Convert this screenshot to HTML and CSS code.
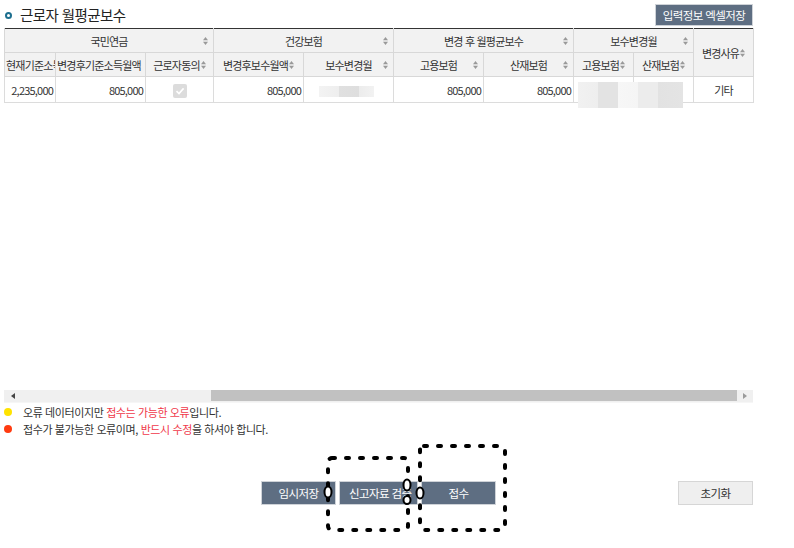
FILE: index.html
```html
<!DOCTYPE html>
<html lang="ko">
<head>
<meta charset="utf-8">
<title>근로자 월평균보수</title>
<link rel="stylesheet" href="styles.css">
</head>
<body>
<div class="page">
  <div class="top">
    <h2 class="title"><span class="bullet"></span>근로자 월평균보수</h2>
    <button class="btn btn-dark btn-excel">입력정보 엑셀저장</button>
  </div>

  <div class="grid-area">
    <table class="grid">
      <colgroup>
        <col class="w51"><col class="w90"><col class="w68"><col class="w90"><col class="w90">
        <col class="w90"><col class="w90"><col class="w60"><col class="w60"><col class="w60">
      </colgroup>
      <thead>
        <tr>
          <th colspan="3"><div class="cell">국민연금</div><svg class="sort" viewBox="0 0 5 8"><polygon points="0,3.2 2.5,0 5,3.2"/><polygon points="0,4.8 2.5,8 5,4.8"/></svg></th>
          <th colspan="2"><div class="cell">건강보험</div><svg class="sort" viewBox="0 0 5 8"><polygon points="0,3.2 2.5,0 5,3.2"/><polygon points="0,4.8 2.5,8 5,4.8"/></svg></th>
          <th colspan="2"><div class="cell">변경 후 월평균보수</div><svg class="sort" viewBox="0 0 5 8"><polygon points="0,3.2 2.5,0 5,3.2"/><polygon points="0,4.8 2.5,8 5,4.8"/></svg></th>
          <th colspan="2"><div class="cell">보수변경월</div><svg class="sort" viewBox="0 0 5 8"><polygon points="0,3.2 2.5,0 5,3.2"/><polygon points="0,4.8 2.5,8 5,4.8"/></svg></th>
          <th rowspan="2"><div class="cell cell-left">변경사유<svg class="sort-inline" viewBox="0 0 5 8"><polygon points="0,3.2 2.5,0 5,3.2"/><polygon points="0,4.8 2.5,8 5,4.8"/></svg></div></th>
        </tr>
        <tr>
          <th><div class="cell cell-left">현재기준소득월액</div></th>
          <th><div class="cell cell-left">변경후기준소득월액</div></th>
          <th><div class="cell">근로자동의<svg class="sort-inline" viewBox="0 0 5 8"><polygon points="0,3.2 2.5,0 5,3.2"/><polygon points="0,4.8 2.5,8 5,4.8"/></svg></div></th>
          <th><div class="cell">변경후보수월액<svg class="sort-inline" viewBox="0 0 5 8"><polygon points="0,3.2 2.5,0 5,3.2"/><polygon points="0,4.8 2.5,8 5,4.8"/></svg></div></th>
          <th><div class="cell">보수변경월</div><svg class="sort" viewBox="0 0 5 8"><polygon points="0,3.2 2.5,0 5,3.2"/><polygon points="0,4.8 2.5,8 5,4.8"/></svg></th>
          <th><div class="cell">고용보험</div><svg class="sort" viewBox="0 0 5 8"><polygon points="0,3.2 2.5,0 5,3.2"/><polygon points="0,4.8 2.5,8 5,4.8"/></svg></th>
          <th><div class="cell">산재보험</div><svg class="sort" viewBox="0 0 5 8"><polygon points="0,3.2 2.5,0 5,3.2"/><polygon points="0,4.8 2.5,8 5,4.8"/></svg></th>
          <th><div class="cell">고용보험<svg class="sort-inline" viewBox="0 0 5 8"><polygon points="0,3.2 2.5,0 5,3.2"/><polygon points="0,4.8 2.5,8 5,4.8"/></svg></div></th>
          <th><div class="cell">산재보험<svg class="sort-inline" viewBox="0 0 5 8"><polygon points="0,3.2 2.5,0 5,3.2"/><polygon points="0,4.8 2.5,8 5,4.8"/></svg></div></th>
        </tr>
      </thead>
      <tbody>
        <tr>
          <td class="num">2,235,000</td>
          <td class="num">805,000</td>
          <td class="ctr"><span class="chk"><svg viewBox="0 0 14 14"><path d="M3.5 7.2 L6 9.6 L10.6 4.4" fill="none" stroke="#fff" stroke-width="1.6"/></svg></span></td>
          <td class="num">805,000</td>
          <td class="ctr"></td>
          <td class="num">805,000</td>
          <td class="num">805,000</td>
          <td></td>
          <td></td>
          <td class="ctr">기타</td>
        </tr>
      </tbody>
    </table>
    <div class="blur blur-month"></div>
    <div class="blur blur-ins"></div>
  </div>

  <div class="hscroll">
    <span class="sb-btn sb-left"></span>
    <span class="sb-track"><span class="sb-thumb"></span></span>
    <span class="sb-btn sb-right"></span>
  </div>

  <ul class="legend">
    <li><span class="dot dot-yellow"></span><span class="msg">오류 데이터이지만 <em>접수는 가능한 오류</em>입니다.</span></li>
    <li><span class="dot dot-red"></span><span class="msg">접수가 불가능한 오류이며, <em>반드시 수정</em>을 하셔야 합니다.</span></li>
  </ul>

  <div class="actions">
    <div class="act-left"></div>
    <div class="act-center">
      <button class="btn btn-dark btn-act">임시저장</button>
      <button class="btn btn-dark btn-act btn-verify">신고자료 검증</button>
      <button class="btn btn-dark btn-act">접수</button>
    </div>
    <div class="act-right">
      <button class="btn btn-light btn-act">초기화</button>
    </div>
  </div>

  <svg class="marks" viewBox="0 0 794 548">
    <rect x="328" y="458" width="80" height="72" rx="4" class="dash"/>
    <rect x="420" y="446" width="85" height="84" rx="4" class="dash"/>
    <ellipse cx="328" cy="492" rx="3.5" ry="5.5" class="ring"/>
    <ellipse cx="407" cy="485" rx="3.5" ry="5.5" class="ring"/>
    <ellipse cx="407" cy="500" rx="3.5" ry="4" class="ring"/>
    <ellipse cx="420" cy="493" rx="3.5" ry="5.5" class="ring"/>
  </svg>
</div>
</body>
</html>
```

FILE: styles.css
```css
* { box-sizing: border-box; }
html, body { margin: 0; padding: 0; background: #fff; }
body {
  font-family: "Noto Sans CJK KR", "Noto Sans", sans-serif;
  color: #333;
}
.page {
  position: relative;
  width: 794px;
  height: 548px;
  overflow: hidden;
}

/* top bar */
.top {
  display: flex;
  justify-content: space-between;
  align-items: center;
  height: 28px;
  padding: 3px 41px 1px 4px;
}
.title {
  display: flex;
  align-items: center;
  margin: 0;
  font-size: 14.5px;
  font-weight: normal;
  letter-spacing: -0.6px;
  color: #222;
  line-height: 20px;
}
.bullet {
  width: 7px;
  height: 7px;
  border: 2px solid #1d6f8f;
  border-radius: 50%;
  margin: 0 8px 0 1px;
}
.btn {
  font-family: inherit;
  border: 1px solid #cfd3d8;
  padding: 0;
  cursor: pointer;
  letter-spacing: -0.6px;
}
.btn-dark { background: #5e6e82; color: #fff; }
.btn-light { background: #efefef; color: #333; border-color: #d6d6d6; }
.btn-excel {
  width: 98px;
  height: 22px;
  font-size: 11.5px;
  line-height: 20px;
}

/* grid */
.grid-area {
  position: relative;
  height: 362px;
  margin: 0 41px 0 4px;
}
.grid {
  width: 749px;
  table-layout: fixed;
  border-collapse: collapse;
  border-top: 1px solid #333;
  font-size: 11px;
  letter-spacing: -0.8px;
}
.w51 { width: 51px; }
.w68 { width: 68px; }
.w90 { width: 90px; }
.w60 { width: 60px; }
.grid th {
  position: relative;
  height: 24px;
  padding: 0;
  background: #f2f2f2;
  border: 1px solid #d8d8d8;
  font-weight: normal;
  color: #333;
}
.grid thead tr:first-child th { border-top: 0; }
.cell {
  overflow: hidden;
  white-space: nowrap;
  text-align: center;
  line-height: 22px;
}
.cell-left { text-align: left; padding-left: 1px; }
.grid th[rowspan] .cell { text-align: center; padding-left: 0; }
.sort {
  position: absolute;
  right: 5px;
  top: 8px;
  width: 5px;
  height: 8px;
  fill: #999;
}
.sort-inline {
  width: 5px;
  height: 8px;
  fill: #999;
  margin-left: 1px;
  vertical-align: 1px;
}
.grid td {
  height: 26px;
  padding: 0 2px 0 0;
  border: 1px solid #dcdcdc;
  border-top: 0;
  white-space: nowrap;
  overflow: hidden;
  color: #333;
}
.grid td.num { text-align: right; }
.grid td.ctr { text-align: center; padding: 0; }
.chk {
  display: inline-block;
  width: 14px;
  height: 14px;
  background: #dcdcdc;
  border-radius: 2px;
  vertical-align: middle;
}
.chk svg { display: block; width: 14px; height: 14px; }

.blur {
  position: absolute;
}
.blur-month {
  left: 315px;
  top: 58px;
  width: 55px;
  height: 11px;
  background: linear-gradient(90deg, #f3f3f3 0, #eeeeee 20px, #e0e0e0 20px, #dedede 40px, #ececec 40px, #f2f2f2 55px);
}
.blur-ins {
  left: 574px;
  top: 54px;
  width: 105px;
  height: 26px;
  background: linear-gradient(90deg, #f1f1f1 0, #eeeeee 20px, #e3e3e3 20px, #e3e3e3 40px, #f7f7f7 40px, #f5f5f5 60px, #ececec 60px, #ececec 80px, #e2e2e2 80px, #e4e4e4 105px);
}

/* horizontal scrollbar */
.hscroll {
  display: flex;
  height: 13px;
  margin: 0 41px 0 4px;
  background: #f0f0f0;
  border-bottom: 1px solid #f6f6f6;
}
.sb-btn {
  position: relative;
  width: 16px;
  flex: none;
}
.sb-left::before, .sb-right::before {
  content: "";
  position: absolute;
  top: 3px;
  border-top: 3.5px solid transparent;
  border-bottom: 3.5px solid transparent;
}
.sb-left::before { left: 7px; border-right: 4px solid #444; }
.sb-right::before { left: 6px; border-left: 4px solid #9a9a9a; }
.sb-track {
  flex: 1;
  display: flex;
  padding-left: 191px;
}
.sb-thumb {
  flex: 1;
  height: 11px;
  background: #c1c1c1;
}

/* legend */
.legend {
  list-style: none;
  margin: 0;
  padding: 0 0 0 4px;
  font-size: 11px;
  letter-spacing: -0.4px;
}
.legend li {
  display: flex;
  align-items: center;
  height: 17px;
  color: #333;
}
.msg { white-space: pre; }
.legend em { font-style: normal; color: #f0384a; }
.dot {
  width: 8px;
  height: 8px;
  border-radius: 50%;
  margin-right: 11px;
  flex: none;
}
.dot-yellow { background: #ffe300; }
.dot-red { background: #ff3b10; }

/* actions */
.actions {
  display: grid;
  grid-template-columns: 1fr auto 1fr;
  margin: 44px 41px 0 4px;
}
.act-center { display: flex; gap: 3px; }
.act-right { display: flex; justify-content: flex-end; }
.btn-act {
  width: 75px;
  height: 24px;
  font-size: 11.5px;
  line-height: 22px;
}
.btn-verify { width: 79px; text-align: left; padding-left: 9px; overflow: hidden; white-space: nowrap; }

/* annotation overlay */
.marks {
  position: absolute;
  left: 0;
  top: 0;
  width: 794px;
  height: 548px;
  pointer-events: none;
}
.dash {
  fill: none;
  stroke: #000;
  stroke-width: 4;
  stroke-dasharray: 3 11;
  stroke-linecap: round;
}
.ring {
  fill: #fff;
  stroke: #000;
  stroke-width: 2;
}
```
